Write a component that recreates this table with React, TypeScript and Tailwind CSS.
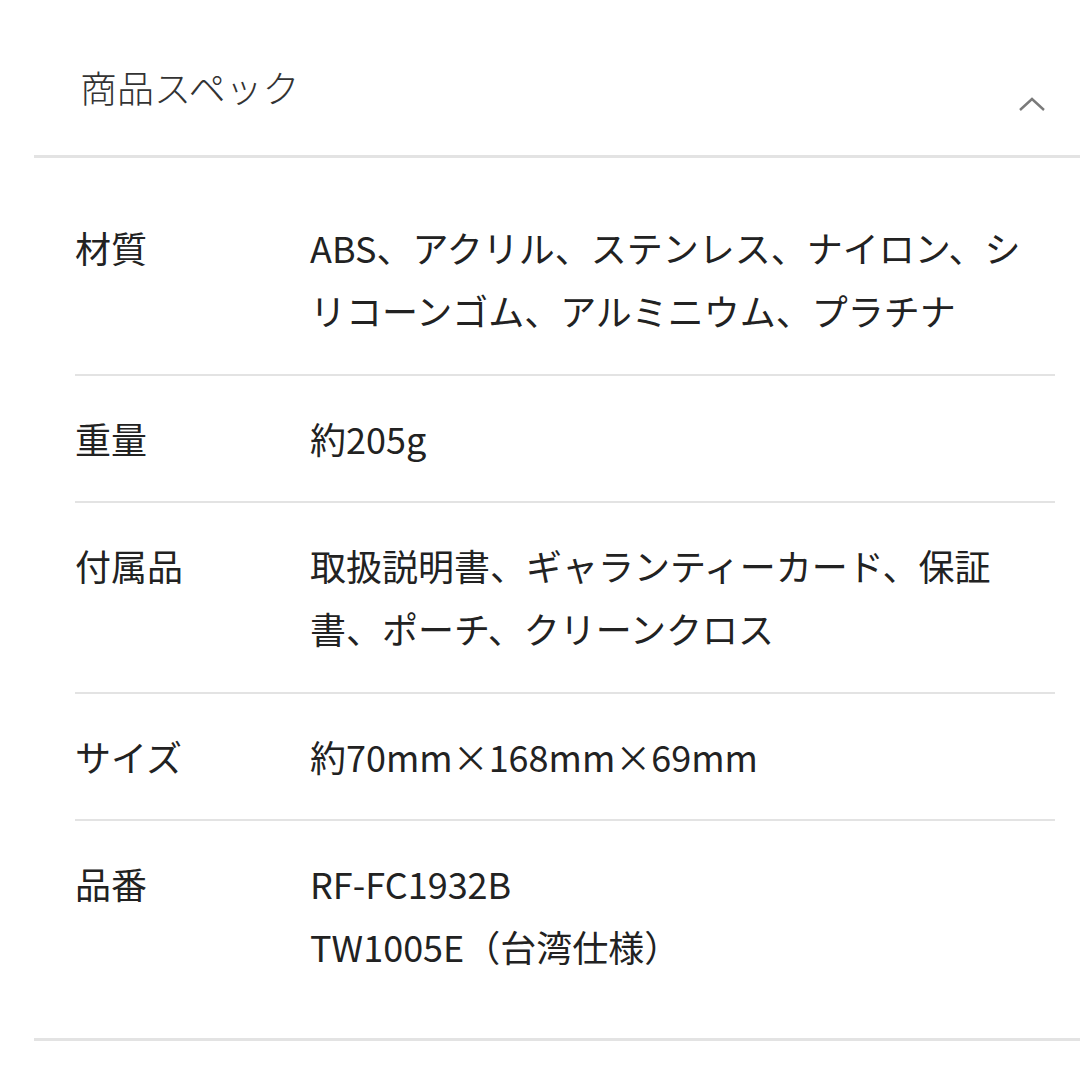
import React from "react";

const specs: { label: string; value: React.ReactNode }[] = [
  { label: "材質", value: "ABS、アクリル、ステンレス、ナイロン、シリコーンゴム、アルミニウム、プラチナ" },
  { label: "重量", value: "約205g" },
  { label: "付属品", value: "取扱説明書、ギャランティーカード、保証書、ポーチ、クリーンクロス" },
  { label: "サイズ", value: "約70mm×168mm×69mm" },
  {
    label: "品番",
    value: (
      <>
        RF-FC1932B
        <br />
        TW1005E（台湾仕様）
      </>
    ),
  },
];

export default function App() {
  return (
    <div
      className="w-[1080px] h-[1080px] bg-white text-[#222] overflow-hidden"
      style={{ fontFamily: '"Noto Sans CJK JP", "Noto Sans", sans-serif' }}
    >
      <div className="ml-[34px] border-b-[3px] border-[#e3e3e3]">
        {/* header */}
        <div className="h-[155px] flex items-start justify-between">
          <h2 className="pt-[60px] pl-[46px] text-[37px] leading-[54px] font-light text-[#333]">
            商品スペック
          </h2>
          <svg
            width="28"
            height="16"
            viewBox="0 0 28 16"
            className="mt-[96px] mr-[34px]"
          >
            <polyline
              points="2,14 14,3 26,14"
              fill="none"
              stroke="#7a7a7a"
              strokeWidth="2.4"
            />
          </svg>
        </div>
      </div>

      <div className="ml-[34px] border-b-[3px] border-[#e3e3e3]">
        <div className="ml-[41px] mr-[25px] pt-[27px] pb-[28px]">
          {specs.map((s, i) => (
            <div
              key={s.label}
              className={
                "flex py-[31.25px] text-[36px] leading-[63px] " +
                (i < specs.length - 1 ? "border-b-2 border-[#e3e3e3]" : "")
              }
            >
              <div className="w-[235px] shrink-0">{s.label}</div>
              <div className="w-[725px]">{s.value}</div>
            </div>
          ))}
        </div>
      </div>
    </div>
  );
}
